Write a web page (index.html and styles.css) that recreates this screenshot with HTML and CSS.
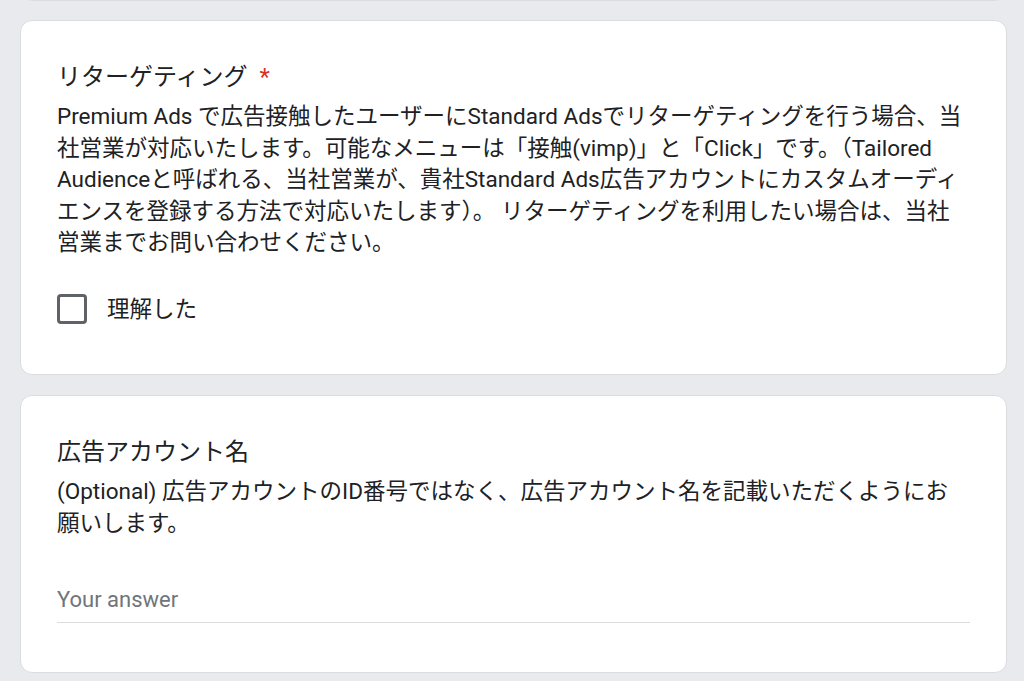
FILE: index.html
```html
<!DOCTYPE html>
<html lang="ja">
<head>
    <meta charset="UTF-8">
    <meta name="viewport" content="width=device-width, initial-scale=1.0">
    <title>フォーム</title>
    <link rel="stylesheet" href="styles.css">
</head>
<body>
    <div class="form">
        <div class="card prev"></div>

        <div class="card">
            <div class="title">リターゲティング<span class="required">*</span></div>
            <div class="desc">Premium Ads で広告接触したユーザーにStandard Adsでリターゲティングを行う場合、当社営業が対応いたします。可能なメニューは「接触(vimp)」と「Click」です。（Tailored Audienceと呼ばれる、当社営業が、貴社Standard Ads広告アカウントにカスタムオーディエンスを登録する方法で対応いたします）。 リターゲティングを利用したい場合は、当社営業までお問い合わせください。</div>
            <label class="option">
                <span class="box"></span>
                <span class="option-text">理解した</span>
            </label>
        </div>

        <div class="card">
            <div class="title">広告アカウント名</div>
            <div class="desc">(Optional) 広告アカウントのID番号ではなく、広告アカウント名を記載いただくようにお願いします。</div>
            <input class="answer" type="text" placeholder="Your answer">
        </div>
    </div>
</body>
</html>
```

FILE: styles.css
```css
body {
    margin: 0;
    background-color: #e8eaed;
    font-family: Roboto, "Noto Sans CJK JP", sans-serif;
    color: #202124;
}

.form {
    padding: 0 17px 20px 20px;
}

.card {
    background-color: white;
    border: 1px solid #dadce0;
    border-radius: 12px;
    padding: 36px;
    margin-bottom: 20px;
}

.card.prev {
    height: 0;
    padding: 0 0 48px;
    margin-top: -49px;
    margin-bottom: 19px;
}

.title {
    padding-top: 2px;
    font-size: 24px;
    line-height: 36px;
}

.required {
    color: #d93025;
    margin-left: 12px;
}

.desc {
    margin-top: 6px;
    font-size: 22.5px;
    line-height: 31.5px;
}

.option {
    display: flex;
    align-items: center;
    margin: 35px 0 13px;
}

.box {
    width: 24px;
    height: 24px;
    border: 3px solid #5f6368;
    border-radius: 4px;
    margin-right: 20px;
}

.option-text {
    font-size: 22.5px;
    line-height: 31.5px;
}

.answer {
    display: block;
    width: 100%;
    box-sizing: border-box;
    margin: 45px 0 13px;
    padding: 0 0 6px;
    border: none;
    border-bottom: 1px solid #dadce0;
    font-family: Roboto, sans-serif;
    font-size: 22px;
    line-height: 31.5px;
    color: #202124;
    outline: none;
}

.answer::placeholder {
    color: #70757a;
}
```
